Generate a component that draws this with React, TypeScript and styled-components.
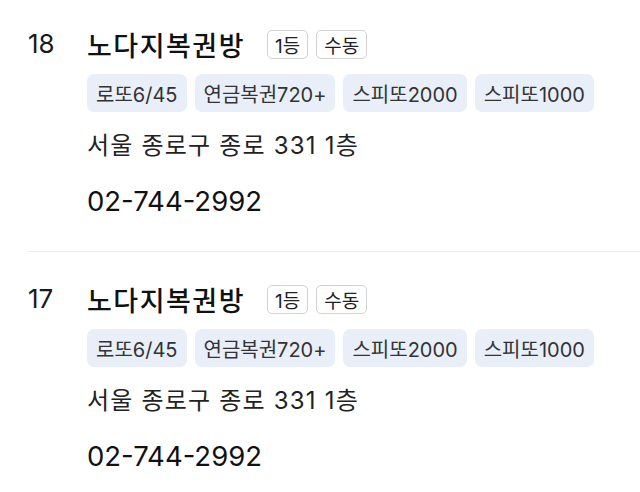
import React from 'react';
import styled, { createGlobalStyle } from 'styled-components';

type Store = {
  rank: number;
  name: string;
  badges: string[];
  games: string[];
  address: string;
  phone: string;
};

const stores: Store[] = [
  {
    rank: 18,
    name: '노다지복권방',
    badges: ['1등', '수동'],
    games: ['로또6/45', '연금복권720+', '스피또2000', '스피또1000'],
    address: '서울 종로구 종로 331 1층',
    phone: '02-744-2992',
  },
  {
    rank: 17,
    name: '노다지복권방',
    badges: ['1등', '수동'],
    games: ['로또6/45', '연금복권720+', '스피또2000', '스피또1000'],
    address: '서울 종로구 종로 331 1층',
    phone: '02-744-2992',
  },
];

export default function App() {
  return (
    <>
      <GlobalStyle />
      <List>
        {stores.map((store) => (
          <Item key={store.rank}>
            <Rank>{store.rank}</Rank>
            <Body>
              <Header>
                <Name>{store.name}</Name>
                <Badges>
                  {store.badges.map((b) => (
                    <Badge key={b}>{b}</Badge>
                  ))}
                </Badges>
              </Header>
              <Tags>
                {store.games.map((g) => (
                  <Tag key={g}>{g}</Tag>
                ))}
              </Tags>
              <Address>{store.address}</Address>
              <Phone>{store.phone}</Phone>
            </Body>
          </Item>
        ))}
      </List>
    </>
  );
}

const GlobalStyle = createGlobalStyle`
  body {
    margin: 0;
    background: #ffffff;
    font-family: Inter, 'Noto Sans CJK KR', sans-serif;
    color: #111111;
  }
`;

const List = styled.ul`
  list-style: none;
  margin: 0;
  padding: 0 0 0 28px;
`;

const Item = styled.li`
  display: flex;
  padding: 31px 0 34px;
  border-bottom: 1px solid #ececec;
  &:first-child {
    padding-top: 28px;
  }
`;

const Rank = styled.div`
  width: 24px;
  height: 32px;
  line-height: 32px;
  font-size: 26px;
  font-weight: 400;
  text-align: center;
  color: #1a1a1a;
  white-space: nowrap;
  margin-right: 35px;
`;

const Body = styled.div`
  display: flex;
  flex-direction: column;
`;

const Header = styled.div`
  display: flex;
  align-items: center;
  height: 32px;
`;

const Name = styled.span`
  font-size: 27px;
  font-weight: 500;
  letter-spacing: 1.5px;
  color: #111111;
`;

const Badges = styled.div`
  display: flex;
  gap: 8px;
  margin-left: 22px;
`;

const Badge = styled.span`
  display: inline-flex;
  align-items: center;
  height: 27px;
  padding: 0 7px;
  border: 1px solid #d2d2d2;
  border-radius: 5px;
  font-size: 19px;
  color: #222222;
`;

const Tags = styled.div`
  display: flex;
  gap: 8px;
  margin-top: 14px;
`;

const Tag = styled.span`
  display: inline-flex;
  align-items: center;
  height: 38px;
  padding: 0 9px;
  border-radius: 7px;
  background: #e9eff8;
  font-size: 20px;
  color: #333333;
`;

const Address = styled.div`
  margin-top: 19px;
  line-height: 30px;
  font-size: 24px;
  letter-spacing: 1.2px;
  color: #222222;
`;

const Phone = styled.div`
  margin-top: 24px;
  line-height: 32px;
  font-size: 27.5px;
  color: #111111;
`;
